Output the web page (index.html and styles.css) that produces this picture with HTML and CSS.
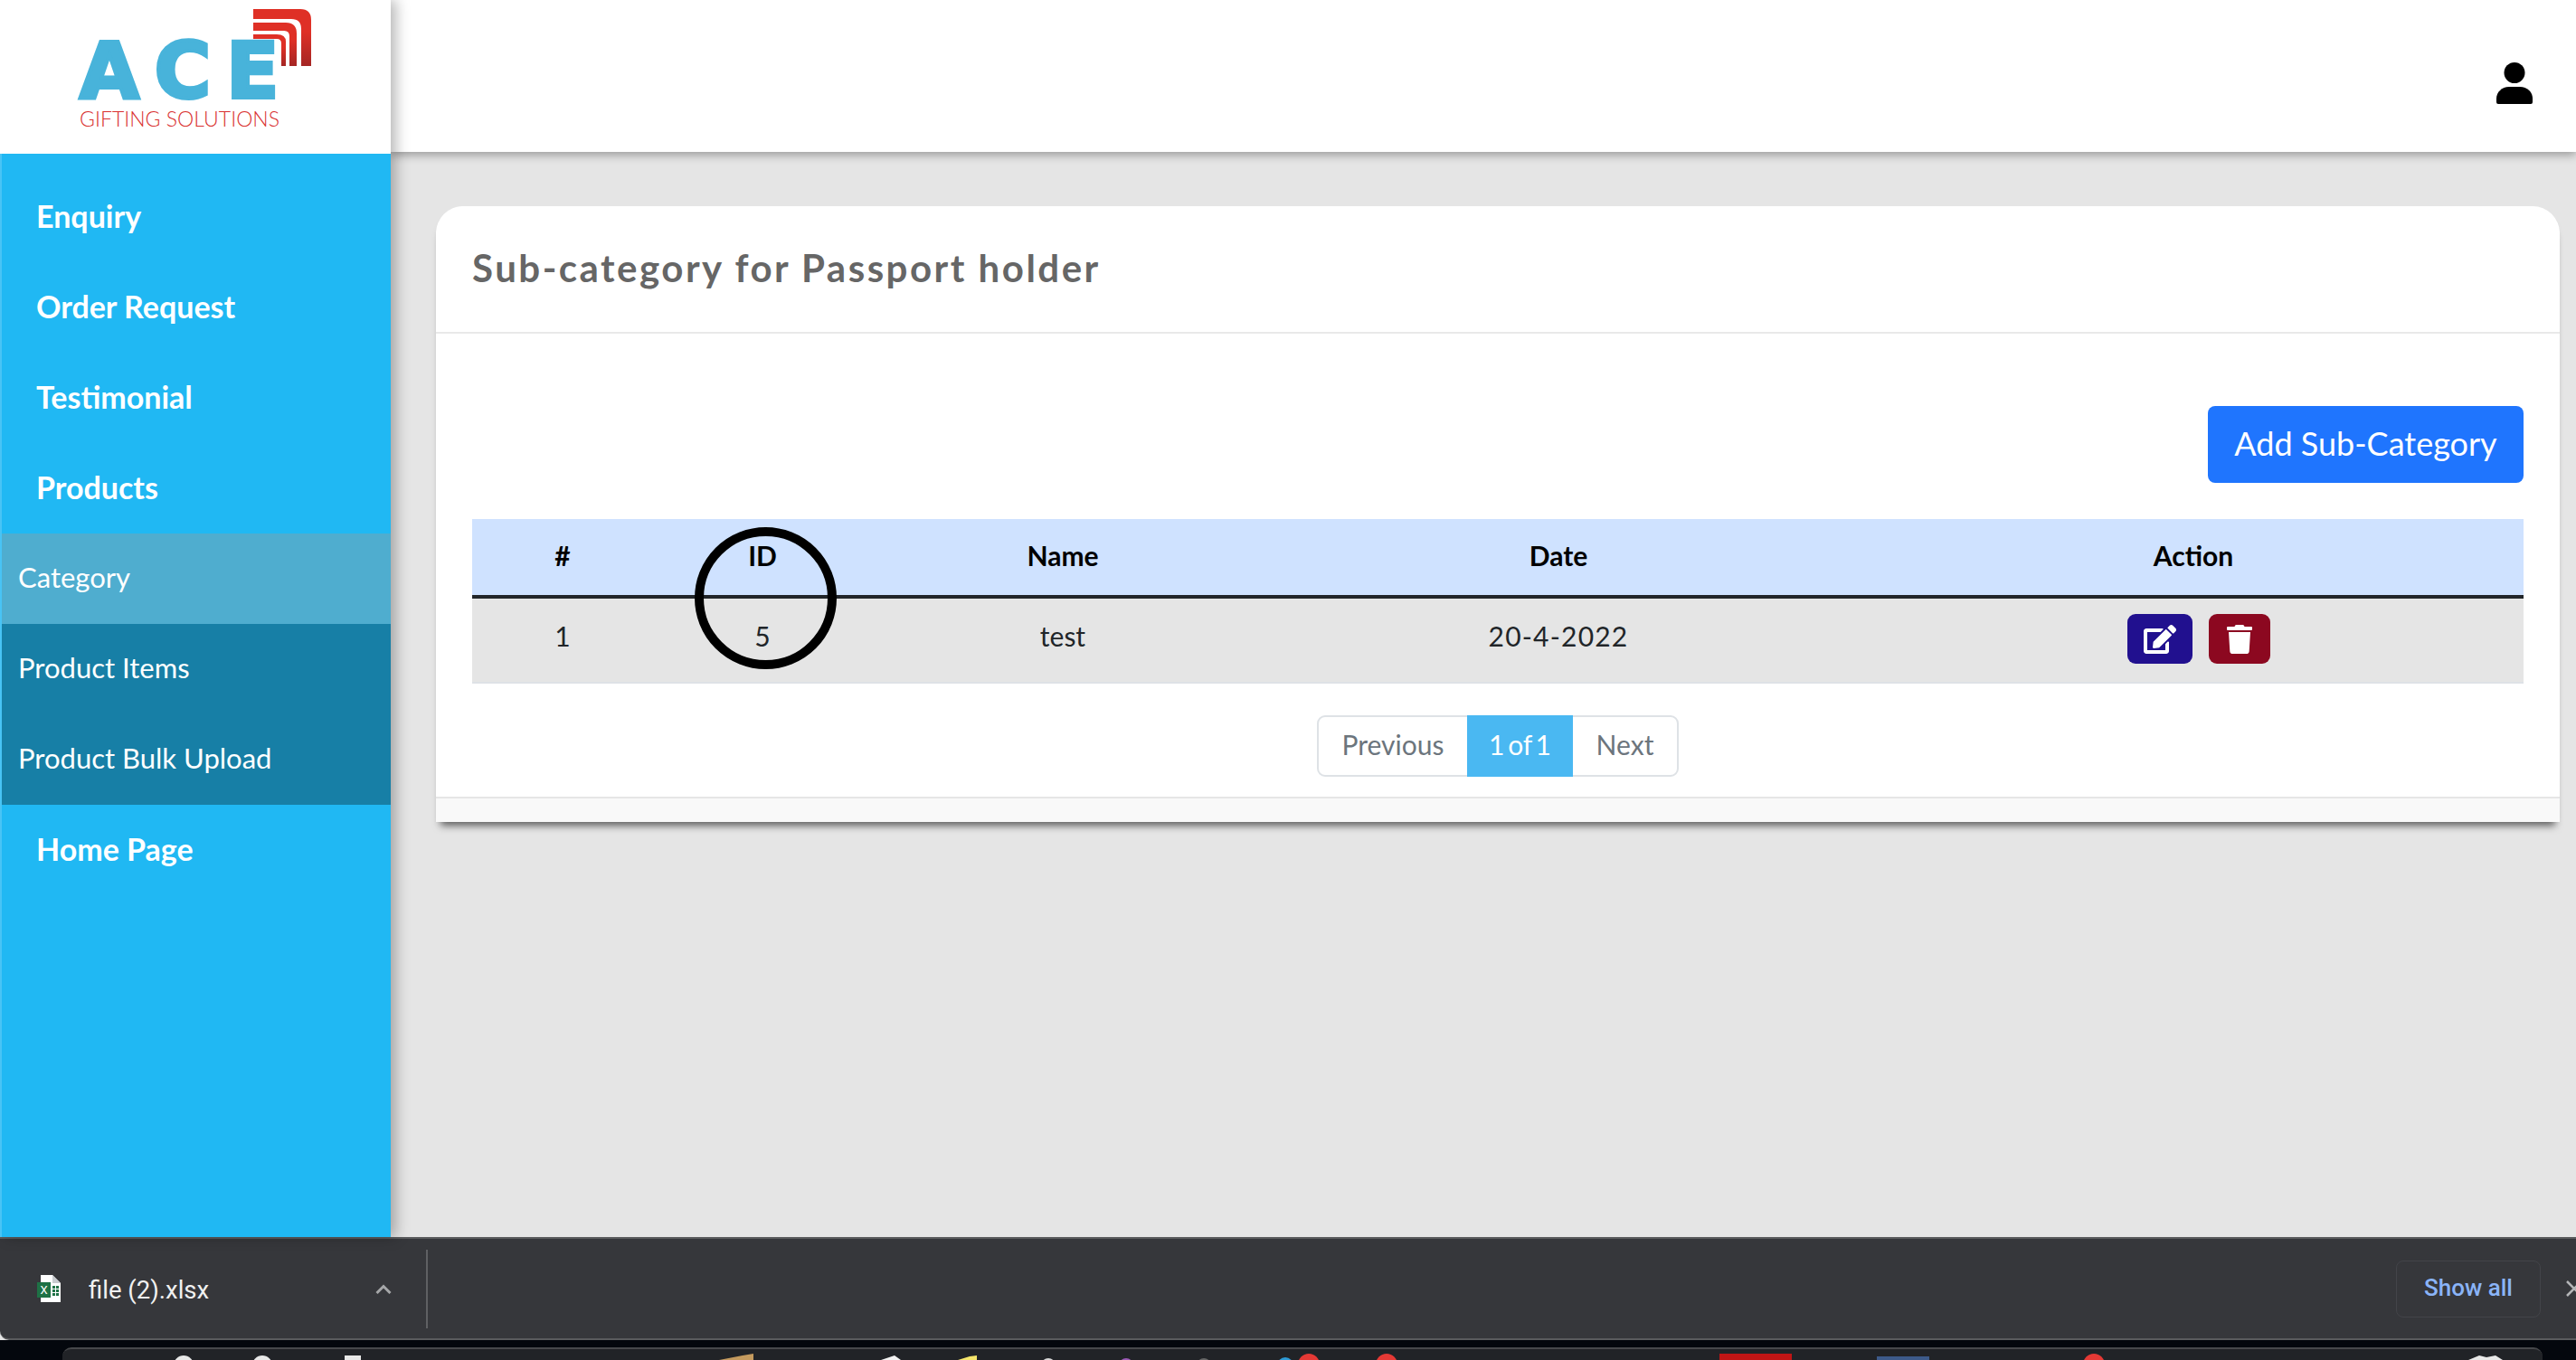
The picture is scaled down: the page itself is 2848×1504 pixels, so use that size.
FILE: index.html
```html
<!DOCTYPE html>
<html lang="en">
<head>
    <meta charset="UTF-8">
    <meta name="viewport" content="width=device-width, initial-scale=1.0">
    <title>Sub-category</title>
    <link rel="stylesheet" href="styles.css">
</head>
<body>
    <div class="page">
        <div class="main">
            <aside class="sidebar">
                <div class="logo">
                    <div class="logo-mark">
                        <span class="logo-ace">ACE</span>
                        <span class="logo-sub">GIFTING SOLUTIONS</span>
                        <svg class="logo-arcs" viewBox="0 0 64 64" width="64" height="64">
                            <defs>
                                <linearGradient id="arcRed" x1="0" y1="0" x2="0" y2="1">
                                    <stop offset="0.4" stop-color="#df3026"/>
                                    <stop offset="1" stop-color="#a42624"/>
                                </linearGradient>
                            </defs>
                            <path fill="url(#arcRed)" d="M0 0H52Q64 0 64 12V63H53V22Q53 11 42 11H0Z"/>
                            <path fill="url(#arcRed)" d="M0 15H36Q48 15 48 27V63H40V30Q40 24 34 24H0Z"/>
                            <path fill="url(#arcRed)" d="M0 28H26Q36 28 36 36V63H31V38Q31 33 26 33H0Z"/>
                        </svg>
                    </div>
                </div>
                <nav class="menu">
                    <a class="menu-item">Enquiry</a>
                    <a class="menu-item">Order Request</a>
                    <a class="menu-item">Testimonial</a>
                    <a class="menu-item">Products</a>
                    <a class="sub-item active">Category</a>
                    <a class="sub-item">Product Items</a>
                    <a class="sub-item">Product Bulk Upload</a>
                    <a class="menu-item">Home Page</a>
                </nav>
            </aside>

            <div class="content">
                <header class="topbar">
                    <svg class="user-icon" viewBox="0 0 40 46" width="40" height="46">
                        <circle cx="20" cy="11.5" r="11.5"/>
                        <path d="M2 46Q0 46 0 44V40C0 33 6 27 14 27H26C34 27 40 33 40 40V44Q40 46 38 46Z"/>
                    </svg>
                </header>

                <main class="workspace">
                    <section class="card">
                        <div class="card-header">
                            <h2>Sub-category for Passport holder</h2>
                        </div>
                        <div class="card-body">
                            <div class="actions">
                                <button type="button" class="btn-add">Add Sub-Category</button>
                            </div>

                            <div class="table-wrap">
                                <table>
                                    <thead>
                                        <tr>
                                            <th class="col-num">#</th>
                                            <th class="col-id">ID</th>
                                            <th class="col-name">Name</th>
                                            <th class="col-date">Date</th>
                                            <th>Action</th>
                                        </tr>
                                    </thead>
                                    <tbody>
                                        <tr>
                                            <td>1</td>
                                            <td>5</td>
                                            <td>test</td>
                                            <td class="cell-date">20-4-2022</td>
                                            <td class="cell-actions">
                                                <div class="row-actions">
                                                    <button type="button" class="btn-icon btn-edit">
                                                        <svg viewBox="0 0 576 512" width="36" height="32"><path d="M402.6 83.2l90.2 90.2c3.8 3.8 3.8 10 0 13.8L274.4 405.6l-92.8 10.3c-12.4 1.4-22.9-9.1-21.5-21.5l10.3-92.8L388.8 83.2c3.8-3.8 10-3.8 13.8 0zm162-22.9l-48.8-48.8c-15.2-15.2-39.9-15.2-55.2 0l-35.4 35.4c-3.8 3.8-3.8 10 0 13.8l90.2 90.2c3.8 3.8 10 3.8 13.8 0l35.4-35.4c15.2-15.3 15.2-40 0-55.2zM384 346.2V448H64V128h229.8c3.2 0 6.2-1.3 8.5-3.5l40-40c7.6-7.6 2.2-20.5-8.5-20.5H48C21.5 64 0 85.5 0 112v352c0 26.5 21.5 48 48 48h352c26.5 0 48-21.5 48-48V306.2c0-10.7-12.9-16-20.5-8.5l-40 40c-2.2 2.3-3.5 5.3-3.5 8.5z"/></svg>
                                                    </button>
                                                    <button type="button" class="btn-icon btn-delete">
                                                        <svg viewBox="0 0 448 512" width="28" height="32"><path d="M432 32H312l-9.4-18.7A24 24 0 0 0 281.1 0H166.8a23.72 23.72 0 0 0-21.4 13.3L136 32H16A16 16 0 0 0 0 48v32a16 16 0 0 0 16 16h416a16 16 0 0 0 16-16V48a16 16 0 0 0-16-16zM53.2 467a48 48 0 0 0 47.9 45h245.8a48 48 0 0 0 47.9-45L416 128H32z"/></svg>
                                                    </button>
                                                </div>
                                            </td>
                                        </tr>
                                    </tbody>
                                </table>
                                <!-- Marca dibujada a mano sobre la columna ID -->
                                <div class="circle-mark"></div>
                            </div>

                            <div class="pager-row">
                                <div class="pager">
                                    <span class="pager-item">Previous</span>
                                    <span class="pager-item current">1 of 1</span>
                                    <span class="pager-item">Next</span>
                                </div>
                            </div>
                        </div>
                        <div class="card-footer"></div>
                    </section>
                </main>
            </div>
        </div>

        <div class="download-bar">
            <div class="download-file">
                <svg class="file-icon" viewBox="0 0 26 30" width="26" height="30">
                    <path fill="#fff" d="M4 0H17L26 9V30H4Z"/>
                    <path fill="#c9ccd0" d="M17 0L26 9H17Z"/>
                    <rect x="0" y="8" width="15" height="17" fill="#1e7145"/>
                    <text x="7.5" y="21" class="file-x">X</text>
                    <path fill="#1e7145" d="M17 12h3v3h-3zM21 12h3v3h-3zM17 16h3v3h-3zM21 16h3v3h-3zM17 20h3v3h-3zM21 20h3v3h-3z"/>
                </svg>
                <span class="file-name">file (2).xlsx</span>
                <svg class="chevron" viewBox="0 0 18 11" width="18" height="11">
                    <path d="M1.5 10L9 2.5L16.5 10" fill="none" stroke="#a5a6a8" stroke-width="3"/>
                </svg>
            </div>
            <div class="download-sep"></div>
            <div class="download-right">
                <button type="button" class="btn-show">Show all</button>
                <svg class="close-icon" viewBox="0 0 18 18" width="18" height="18">
                    <path d="M1 1L17 17M17 1L1 17" stroke="#b5b6b8" stroke-width="2.5"/>
                </svg>
            </div>
        </div>

        <div class="desktop">
            <div class="dock">
                <svg viewBox="0 0 2742 12" width="2742" height="12">
                    <circle cx="134" cy="18" r="11" fill="#e8e8e8"/>
                    <circle cx="221" cy="18" r="11" fill="#e8e8e8"/>
                    <rect x="312" y="7" width="18" height="5" fill="#e8e8e8"/>
                    <path d="M726 12L752 7L764 5V12Z" fill="#c49a5e"/>
                    <path d="M905 12L920 7L927 12Z" fill="#f2f2f2"/>
                    <path d="M990 12L1003 8L1011 7V12Z" fill="#f5e56b"/>
                    <circle cx="1090" cy="18" r="8" fill="#d8d8d8"/>
                    <circle cx="1176" cy="18" r="8" fill="#9b59b6"/>
                    <circle cx="1262" cy="18" r="8" fill="#666"/>
                    <circle cx="1352" cy="18" r="9" fill="#2e9bd6"/>
                    <circle cx="1378" cy="17" r="12" fill="#e53935"/>
                    <circle cx="1464" cy="17" r="12" fill="#e53935"/>
                    <rect x="1832" y="5" width="80" height="7" fill="#c01515"/>
                    <rect x="2006" y="8" width="58" height="4" fill="#3d5a8a"/>
                    <circle cx="2246" cy="17" r="12" fill="#e53935"/>
                    <path d="M2660 12L2672 7L2680 9L2690 7L2698 12Z" fill="#e8e8e8"/>
                </svg>
            </div>
        </div>
    </div>
</body>
</html>
```

FILE: styles.css
```css
* {
    box-sizing: border-box;
}

body {
    margin: 0;
    width: 2848px;
    height: 1504px;
    overflow: hidden;
    font-family: Lato, "Open Sans", sans-serif;
    background-color: #e5e5e5;
    color: #212529;
}

.page {
    display: flex;
    flex-direction: column;
    height: 1504px;
}

.main {
    display: flex;
    height: 1368px;
}

/* Barra lateral */
.sidebar {
    position: relative;
    z-index: 3;
    flex: 0 0 432px;
    display: flex;
    flex-direction: column;
    background-color: #20b8f3;
    box-shadow: 6px 0 14px rgba(0, 0, 0, 0.28);
}

.logo {
    height: 170px;
    padding: 10px 0 0 88px;
    background-color: #fff;
}

.logo-mark {
    position: relative;
    display: flex;
    flex-direction: column;
    width: 260px;
}

.logo-ace {
    height: 62px;
    margin-top: 38px;
    font-family: "DejaVu Sans", sans-serif;
    font-weight: 700;
    font-size: 85px;
    line-height: 62px;
    letter-spacing: 17px;
    color: #48b3da;
    -webkit-text-stroke: 4px #48b3da;
}

.logo-sub {
    margin-top: 9px;
    font-size: 23px;
    font-weight: 300;
    line-height: 24px;
    white-space: nowrap;
    color: #d9302f;
}

.logo-arcs {
    position: absolute;
    left: 192px;
    top: 0;
}

.menu {
    flex: 1;
    display: flex;
    flex-direction: column;
    padding-top: 20px;
    border-left: 2px solid rgba(255, 255, 255, 0.18);
}

.menu-item,
.sub-item {
    display: flex;
    align-items: center;
    height: 100px;
    padding-bottom: 4px;
    color: #fff;
}

.menu-item {
    padding-left: 38px;
    font-size: 34px;
    font-weight: 700;
}

.sub-item {
    padding-left: 18px;
    font-size: 31px;
    background-color: #177fa6;
}

.sub-item.active {
    background-color: #4fadcf;
}

/* Contenido */
.content {
    flex: 1;
    display: flex;
    flex-direction: column;
}

.topbar {
    position: relative;
    z-index: 2;
    display: flex;
    align-items: center;
    justify-content: flex-end;
    height: 168px;
    padding: 0 48px 0 0;
    background-color: #fff;
    box-shadow: 0 3px 10px rgba(0, 0, 0, 0.35);
}

.user-icon {
    margin-bottom: -15px;
}

.workspace {
    padding: 60px 18px 0 50px;
}

.card {
    background-color: #fff;
    border-radius: 30px 30px 0 0;
    box-shadow: 0 9px 9px -5px rgba(0, 0, 0, 0.6);
}

.card-header {
    display: flex;
    align-items: center;
    height: 141px;
    padding: 0 0 4px 40px;
    border-bottom: 2px solid #e9e9e9;
}

h2 {
    margin: 0;
    font-size: 42px;
    font-weight: 700;
    letter-spacing: 2.5px;
    color: #666;
}

.card-body {
    padding: 80px 40px 22px;
}

.actions {
    display: flex;
    justify-content: flex-end;
    margin-bottom: 40px;
}

.btn-add {
    width: 349px;
    height: 85px;
    padding: 0 0 3px;
    border: none;
    border-radius: 8px;
    background-color: #1f75fe;
    color: #fff;
    font-family: Lato, sans-serif;
    font-size: 36px;
}

/* Tabla */
.table-wrap {
    position: relative;
}

table {
    width: 100%;
    border-collapse: collapse;
    table-layout: fixed;
}

.col-num {
    width: 200px;
}

.col-id {
    width: 242px;
}

.col-name {
    width: 422px;
}

.col-date {
    width: 674px;
}

th {
    height: 86px;
    padding-bottom: 5px;
    background-color: #cfe2ff;
    border-bottom: 4px solid #212529;
    font-size: 30px;
    color: #000;
}

td {
    height: 95px;
    padding-bottom: 11px;
    background-color: #e5e5e5;
    border-bottom: 2px solid #dee2e6;
    text-align: center;
    font-size: 30px;
}

.cell-date {
    letter-spacing: 1.2px;
}

.cell-actions {
    padding-bottom: 4px;
}

.row-actions {
    display: flex;
    justify-content: center;
    gap: 18px;
    padding: 0 0 0 12px;
}

.btn-icon {
    display: flex;
    align-items: center;
    justify-content: center;
    height: 55px;
    padding: 0;
    border: none;
    border-radius: 9px;
    fill: #fff;
}

.btn-edit {
    width: 72px;
    background-color: #21108f;
}

.btn-delete {
    width: 68px;
    background-color: #8c0820;
}

.circle-mark {
    position: absolute;
    left: 246px;
    top: 9px;
    width: 157px;
    height: 157px;
    border: 10px solid #000;
    border-radius: 50%;
}

/* Paginacion */
.pager-row {
    display: flex;
    justify-content: center;
    padding: 35px 0 0 0;
}

.pager {
    display: flex;
    height: 68px;
    border: 2px solid #dee2e6;
    border-radius: 9px;
    font-size: 30px;
    color: #6c757d;
}

.pager-item {
    display: flex;
    align-items: center;
    justify-content: center;
    width: 164px;
    padding-bottom: 4px;
}

.pager-item:last-child {
    width: 115px;
}

.pager-item.current {
    width: 117px;
    margin: -2px 0;
    background-color: #4ab8f2;
    color: #fff;
    word-spacing: -4px;
}

.card-footer {
    height: 28px;
    background-color: #f9f9f9;
    border-top: 2px solid #e6e6e6;
}

/* Barra de descargas */
.download-bar {
    display: flex;
    align-items: center;
    height: 114px;
    background-color: #36373b;
    border-top: 2px solid #5a5b5d;
    border-bottom: 2px solid #5a5b5d;
    border-radius: 0 0 0 10px;
}

.download-file {
    display: flex;
    align-items: center;
    width: 471px;
    padding-left: 41px;
}

.file-x {
    font-family: Roboto, sans-serif;
    font-size: 13px;
    fill: #fff;
    text-anchor: middle;
}

.file-name {
    margin-left: 31px;
    padding-top: 2px;
    font-family: Roboto, sans-serif;
    font-size: 27.5px;
    color: #f0f0f0;
}

.chevron {
    margin-left: 184px;
}

.download-sep {
    width: 2px;
    height: 87px;
    background-color: #5f6063;
}

.download-right {
    flex: 1;
    display: flex;
    align-items: center;
    justify-content: flex-end;
    margin-right: -7px;
    gap: 28px;
}

.btn-show {
    width: 160px;
    height: 63px;
    padding: 0 0 3px;
    background: none;
    border: 1px solid #434449;
    border-radius: 8px;
    color: #8ab4f8;
    font-family: Roboto, sans-serif;
    font-weight: 500;
    font-size: 26px;
}

.desktop {
    flex: 1;
    padding: 8px 37px 0 69px;
    background-color: #04070d;
}

.dock {
    height: 14px;
    overflow: hidden;
    background-color: #212327;
    border-top: 2px solid #47484b;
    border-radius: 10px 10px 0 0;
}

.dock svg {
    display: block;
}
```
